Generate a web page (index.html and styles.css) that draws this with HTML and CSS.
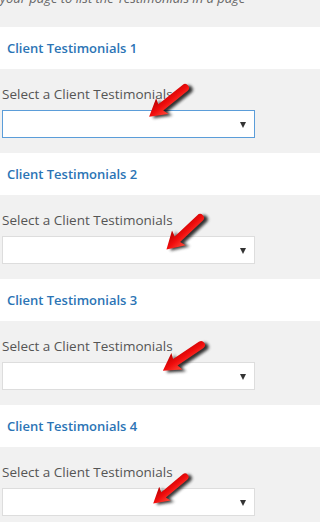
FILE: index.html
```html
<!DOCTYPE html>
<html>
<head>
<meta charset="utf-8">
<link rel="stylesheet" href="styles.css">
</head>
<body>
<div class="intro"><p>your page to list the Testimonials in a page</p></div>

<svg width="0" height="0" class="defs">
  <defs>
    <linearGradient id="red" x1="0" y1="0" x2="0" y2="1">
      <stop offset="0" stop-color="#ff4a3a"/>
      <stop offset="0.5" stop-color="#f00d0d"/>
      <stop offset="1" stop-color="#b80000"/>
    </linearGradient>
    <filter id="blur" x="-20%" y="-40%" width="140%" height="180%">
      <feGaussianBlur stdDeviation="1.6"/>
    </filter>
    <path id="arr" d="M0,-3.9 H31 L29,-10 L46,0 L29,10 L31,3.9 H0 A3.9,3.9 0 0 1 0,-3.9 Z"/>
  </defs>
</svg>

<section class="block">
  <h3 class="title">Client Testimonials 1</h3>
  <div class="body">
    <label class="label">Select a Client Testimonials</label>
    <div class="select focus"><span class="caret"></span></div>
    <svg class="arrow" viewBox="0 0 267 84" width="267" height="84">
      <g transform="translate(185,19) rotate(141.3)">
        <use href="#arr" transform="translate(-2,-3.5)" fill="#000" opacity="0.8" filter="url(#blur)"/>
        <use href="#arr" fill="url(#red)"/>
      </g>
    </svg>
  </div>
</section>

<section class="block">
  <h3 class="title">Client Testimonials 2</h3>
  <div class="body">
    <label class="label">Select a Client Testimonials</label>
    <div class="select"><span class="caret"></span></div>
    <svg class="arrow" viewBox="0 0 267 84" width="267" height="84">
      <g transform="translate(200,23) rotate(136.8)">
        <use href="#arr" transform="translate(-2,-3.5)" fill="#000" opacity="0.8" filter="url(#blur)"/>
        <use href="#arr" fill="url(#red)"/>
      </g>
    </svg>
  </div>
</section>

<section class="block">
  <h3 class="title">Client Testimonials 3</h3>
  <div class="body">
    <label class="label">Select a Client Testimonials</label>
    <div class="select"><span class="caret"></span></div>
    <svg class="arrow" viewBox="0 0 267 84" width="267" height="84">
      <g transform="translate(201,24) rotate(146)">
        <use href="#arr" transform="translate(-2,-3.5)" fill="#000" opacity="0.8" filter="url(#blur)"/>
        <use href="#arr" fill="url(#red)"/>
      </g>
    </svg>
  </div>
</section>

<section class="block">
  <h3 class="title">Client Testimonials 4</h3>
  <div class="body">
    <label class="label">Select a Client Testimonials</label>
    <div class="select"><span class="caret"></span></div>
    <svg class="arrow" viewBox="0 0 267 84" width="267" height="84">
      <g transform="translate(185,30) rotate(140.2) scale(0.9)">
        <use href="#arr" transform="translate(-2,-3.5)" fill="#000" opacity="0.8" filter="url(#blur)"/>
        <use href="#arr" fill="url(#red)"/>
      </g>
    </svg>
  </div>
</section>
</body>
</html>
```

FILE: styles.css
```css
html, body {
  margin: 0;
  padding: 0;
}
body {
  background: #f1f1f1;
  font-family: "Open Sans", "Noto Sans", "Liberation Sans", sans-serif;
  overflow: hidden;
}
.defs {
  position: absolute;
  width: 0;
  height: 0;
}
.intro {
  height: 27px;
  overflow: hidden;
}
.intro p {
  margin: -10px 0 0 0;
  font-size: 13px;
  line-height: 16px;
  font-style: italic;
  color: #666;
  white-space: nowrap;
}
.block {
  display: flex;
  flex-direction: column;
}
.title {
  margin: 0;
  height: 42px;
  background: #fff;
  padding-left: 7px;
  font-size: 13px;
  font-weight: 600;
  line-height: 42px;
  color: #2b74b5;
}
.body {
  position: relative;
  height: 84px;
  box-sizing: border-box;
  padding: 15px 0 0 2px;
  display: flex;
  flex-direction: column;
  gap: 6px;
}
.label {
  font-size: 13.5px;
  line-height: 20px;
  color: #555;
}
.select {
  position: relative;
  width: 253px;
  height: 28px;
  box-sizing: border-box;
  background: #fff;
  border: 1px solid #ddd;
}
.select.focus {
  border-color: #5b9dd9;
}
.caret {
  position: absolute;
  right: 8px;
  top: 11px;
  width: 0;
  height: 0;
  border-left: 3.5px solid transparent;
  border-right: 3.5px solid transparent;
  border-top: 6px solid #333;
}
.arrow {
  position: absolute;
  left: 0;
  top: 0;
  pointer-events: none;
}
```
